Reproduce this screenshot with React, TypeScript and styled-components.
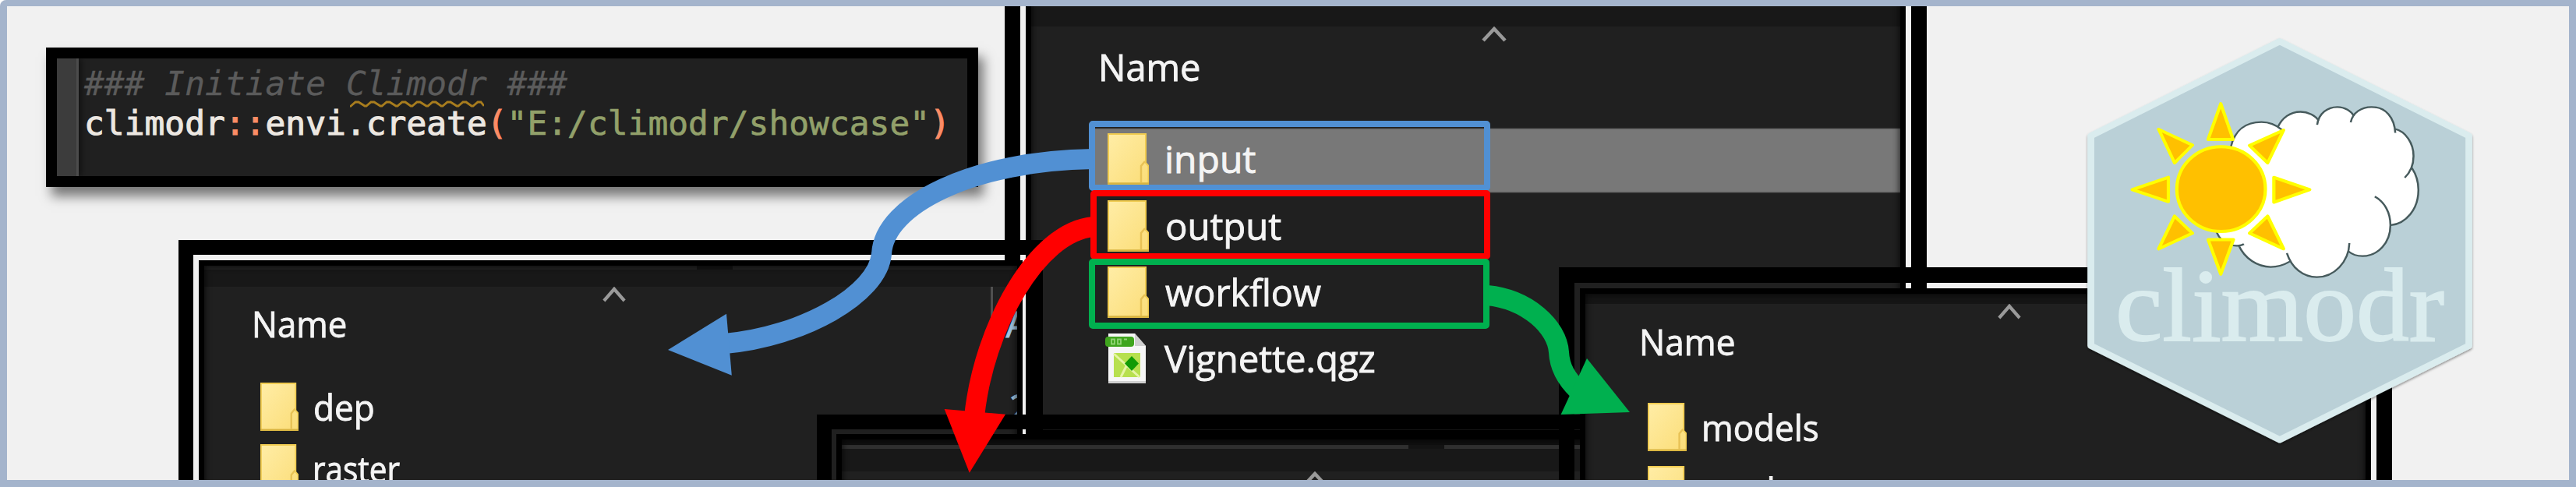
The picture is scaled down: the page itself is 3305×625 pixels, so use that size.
import React from "react";
import styled, { createGlobalStyle, css } from "styled-components";

const Global = createGlobalStyle`
  html, body { margin: 0; padding: 0; background: #fff; }
`;

const Stage = styled.main`
  position: relative;
  width: 3305px;
  height: 625px;
  overflow: hidden;
  background: #f1f1f1;
  border-radius: 8px 0 0 0;
  font-family: "Open Sans", "Noto Sans", sans-serif;
`;

const Frame = styled.div`
  position: absolute;
  inset: 0;
  border: 9px solid #a4b4cc;
  border-top-width: 8px;
  border-left-width: 9px;
  pointer-events: none;
`;

/* ---------- code window ---------- */

const CodeWindow = styled.section`
  position: absolute;
  left: 59px;
  top: 61px;
  width: 1196px;
  height: 179px;
  box-sizing: border-box;
  border: 14px solid #000;
  display: flex;
  background: #202020;
  box-shadow: 7px 12px 14px rgba(0, 0, 0, 0.5);
`;

const Gutter = styled.div`
  flex: 0 0 25px;
  background: #3c3c3c;
  border-right: 3px solid #4c4c4c;
  box-shadow: 3px 0 8px rgba(0, 0, 0, 0.5);
`;

const Code = styled.pre`
  margin: 0;
  padding: 7px 0 0 7px;
  font-family: "DejaVu Sans Mono", "Liberation Mono", monospace;
  font-size: 42.8px;
  letter-spacing: 0.07px;
  line-height: 51.4px;
  color: #ece7e1;
  -webkit-text-stroke: 1.1px currentColor;
`;

const Comment = styled.span`
  color: #5b5b5b;
  font-style: italic;
  -webkit-text-stroke: 0.3px currentColor;
`;

const Misspelled = styled.span`
  position: relative;
`;

const Squiggle = styled.svg`
  position: absolute;
  left: 5px;
  bottom: -6px;
  width: 172px;
  height: 9px;
`;

const Operator = styled.span`
  color: #fb8c66;
`;

const Text = styled.span`
  color: #92a06a;
  -webkit-text-stroke: 0.7px currentColor;
`;

/* ---------- explorer windows ---------- */

const Window = styled.section<{ $x: number; $y: number; $w: number; $h: number; $gap?: number; $ring?: number }>`
  position: absolute;
  left: ${(p) => p.$x}px;
  top: ${(p) => p.$y}px;
  width: ${(p) => p.$w}px;
  height: ${(p) => p.$h}px;
  box-sizing: border-box;
  display: flex;
  border: ${(p) => p.$ring ?? 20}px solid #000;
  padding: ${(p) => p.$gap ?? 7}px;
`;

const Pane = styled.div`
  flex: 1;
  min-width: 0;
  display: flex;
  flex-direction: column;
  overflow: hidden;
  background: #202020;
  border: 7px solid #000;
  position: relative;
  &::after {
    content: "";
    position: absolute;
    inset: 0;
    box-shadow: inset 0 0 9px 1px rgba(0, 0, 0, 0.75);
  }
`;

const Strip = styled.div<{ $h: number; $tone?: string }>`
  flex: 0 0 ${(p) => p.$h}px;
  background: ${(p) => p.$tone ?? "#181818"};
`;

const Seams = styled.div<{ $tone: string; $first: number }>`
  flex: 0 0 5px;
  display: grid;
  grid-template-columns: ${(p) => p.$first}px 1fr;
  column-gap: 46px;
  background: #141414;
  & > i { background: ${(p) => p.$tone}; }
`;

const Header = styled.header<{ $h: number; $indent: number; $top: number }>`
  flex: 0 0 ${(p) => p.$h}px;
  display: flex;
  align-items: flex-start;
  padding-left: ${(p) => p.$indent}px;
  & > span { margin-top: ${(p) => p.$top}px; }
`;

const Label = styled.span<{ $size: number; $sx?: number; $w?: number; $tone?: string }>`
  display: block;
  flex: none;
  ${(p) => p.$w !== undefined && css`width: ${p.$w}px;`}
  font-size: ${(p) => p.$size}px;
  line-height: 60px;
  white-space: nowrap;
  color: ${(p) => p.$tone ?? "#f4f4f4"};
  -webkit-text-stroke: 0.9px currentColor;
  transform: scaleX(${(p) => p.$sx ?? 1});
  transform-origin: 0 50%;
`;

const SortMark = styled.svg<{ $w?: number }>`
  flex: none;
  width: ${(p) => p.$w ?? 32}px;
  height: 20px;
`;

const ColumnRule = styled.i`
  flex: none;
  width: 3px;
  height: 75px;
  background: #505050;
`;

const Row = styled.div<{ $h: number; $indent: number; $selected?: boolean }>`
  flex: 0 0 ${(p) => p.$h}px;
  box-sizing: border-box;
  display: flex;
  align-items: center;
  padding: 0 0 3px ${(p) => p.$indent - 82}px;
  margin-left: 82px;
  ${(p) => p.$selected && css`background: linear-gradient(#202020 1px, #787878 3px, #787878 83px, #202020 85px);`}
`;

const PlainRow = styled(Row)`
  margin-left: 0;
  padding: 0 0 0 ${(p) => p.$indent}px;
`;

const Icon = styled.svg<{ $w: number; $h: number; $gap: number }>`
  flex: none;
  width: ${(p) => p.$w}px;
  height: ${(p) => p.$h}px;
  margin-right: ${(p) => p.$gap}px;
`;

function Folder({ w, h, gap }: { w: number; h: number; gap: number }) {
  return (
    <Icon $w={w} $h={h} $gap={gap} viewBox="0 0 53 66" preserveAspectRatio="none">
      <defs>
        <linearGradient id="folder" x1="0" y1="0" x2="1" y2="1">
          <stop offset="0" stopColor="#ffeda6" />
          <stop offset="1" stopColor="#fbdd78" />
        </linearGradient>
      </defs>
      <path d="M1 1H49V38L52.500 42V65H1Z" fill="url(#folder)" stroke="#f0cb50" strokeWidth="2" />
      <path d="M43 63V42L48 36" fill="none" stroke="#e8c255" strokeWidth="2.500" />
      <path d="M0 64.500H53" stroke="#d9b440" strokeWidth="2.500" />
    </Icon>
  );
}

function ProjectFile() {
  return (
    <Icon $w={54} $h={66} $gap={22} viewBox="0 0 54 66" preserveAspectRatio="none">
      <path d="M4 1H38L52 17V65H4Z" fill="#f6f6f6" />
      <path d="M38 1V17H52Z" fill="#cfcfcf" />
      <path d="M4 63.500H52" stroke="#d0d0d0" strokeWidth="3" />
      <rect x="0" y="5" width="37" height="13" rx="4" fill="#3fa51d" />
      <path d="M8 8.500H12V14.500H8ZM16 8.500H20V14.500H16ZM24 8.500H28" fill="none" stroke="#8fd474" strokeWidth="1.800" />
      <rect x="11" y="26" width="34" height="31" fill="#b7e04e" />
      <path d="M11 27L44 57M28 41L20 57" stroke="#e6f5a5" strokeWidth="3" />
      <path d="M34 30L43 39.500L34 49L25 39.500Z" fill="#129b05" />
    </Icon>
  );
}

function Sort({ w }: { w?: number }) {
  return (
    <SortMark $w={w} viewBox="0 0 32 20" preserveAspectRatio="none">
      <path d="M2 18L16 3L30 18" fill="none" stroke="#9a9a9a" strokeWidth="4.500" />
    </SortMark>
  );
}

/* ---------- annotations ---------- */

const Highlight = styled.div<{ $x: number; $y: number; $w: number; $h: number; $tone: string }>`
  position: absolute;
  left: ${(p) => p.$x}px;
  top: ${(p) => p.$y}px;
  width: ${(p) => p.$w}px;
  height: ${(p) => p.$h}px;
  box-sizing: border-box;
  border: 8.500px solid ${(p) => p.$tone};
  border-radius: 5px;
  &::after {
    content: "";
    position: absolute;
    inset: -1px;
    border: 1.500px solid ${(p) => p.$tone};
  }
`;

const Arrows = styled.svg`
  position: absolute;
  left: 0;
  top: 0;
  width: 3305px;
  height: 625px;
`;

const Badge = styled.svg`
  position: absolute;
  left: 2650px;
  top: 20px;
  width: 655px;
  height: 605px;
  overflow: visible;
`;

const rays = [
  "477,293 515,412 438,412",
  "670,381 621,490 565,432",
  "750,579 640,621 640,538",
  "670,776 565,724 621,667",
  "477,860 438,745 516,745",
  "286,776 335,667 390,724",
  "205,579 316,538 316,619",
  "286,378 390,431 335,490",
];

const lobes =
  "M508 437C520 380 555 354 602 354C625 354 645 362 665 380M652 372C665 340 690 320 722 320C745 320 768 333 778 350" +
  "M773 363C778 325 805 304 835 304C858 304 878 318 886 335M876 355C882 322 910 304 940 304C985 304 1010 340 1013 390" +
  "M1011 377C1045 385 1069 425 1069 467C1069 498 1060 520 1042 539M1064 507C1078 530 1084 552 1084 580C1084 645 1045 692 1000 697" +
  "M950 602C980 620 998 655 998 697C998 755 960 800 912 800C895 800 880 794 869 784M872 757C870 820 825 870 772 870C730 870 695 840 680 790" +
  "M689 818C670 830 650 836 630 836C590 836 550 808 532 764M548 760C540 766 520 768 505 762C485 755 472 740 464 720";

const cloud =
  "M508 437C520 380 555 354 602 354C622 354 640 362 652 372C665 340 690 320 722 320C745 320 768 333 778 348C788 320 808 304 835 304" +
  "C858 304 878 318 886 333C898 314 916 304 940 304C980 304 1008 335 1013 377C1045 385 1069 425 1069 467C1069 482 1068 495 1064 507" +
  "C1078 530 1084 552 1084 580C1084 645 1045 692 1000 697C998 755 960 800 912 800C895 800 880 794 869 784C860 835 820 870 772 870" +
  "C735 870 705 850 689 818C670 830 650 836 630 836C590 836 550 808 532 764C500 770 475 745 464 720L430 577Z";

export default function App() {
  return (
    <>
      <Global />
      <Stage>
        <CodeWindow>
          <Gutter />
          <Code>
            <Comment>
              {"### Initiate "}
              <Misspelled>
                Climodr
                <Squiggle viewBox="0 0 172 9">
                  <path
                    d="M0 8L7 2H11L19 7H21L27 2H31L39 7H41L47 2H51L59 7H61L67 2H71L78 7H80L86 2H90L98 7H100L106 2H110L117 7H119L125 2H129L137 7H139L145 2H149L156 7H158L164 2H168L172 7"
                    fill="none"
                    stroke="#a87d1e"
                    strokeWidth="2.800"
                  />
                </Squiggle>
              </Misspelled>
              {" ###"}
            </Comment>
            {"\nclimodr"}
            <Operator>::</Operator>envi.create<Operator>(</Operator>
            <Text>"E:/climodr/showcase"</Text>
            <Operator>)</Operator>
          </Code>
        </CodeWindow>

        <Window $x={1289} $y={-60} $w={1183} $h={646}>
          <Pane>
            <Strip $h={60} />
            <Header $h={129} $indent={86} $top={21.5}>
              <Label $size={48} $sx={0.98} $w={492}>Name</Label>
              <Sort />
            </Header>
            <Row $h={85.4} $indent={98} $selected>
              <Folder w={53} h={66} gap={20} />
              <Label $size={48} $sx={1.0}>input</Label>
            </Row>
            <Row $h={85.4} $indent={98}>
              <Folder w={53} h={66} gap={21} />
              <Label $size={48} $sx={0.985}>output</Label>
            </Row>
            <Row $h={85.4} $indent={98}>
              <Folder w={53} h={66} gap={21} />
              <Label $size={48} $sx={0.975}>workflow</Label>
            </Row>
            <Row $h={85.4} $indent={95}>
              <ProjectFile />
              <Label $size={48} $sx={0.985}>Vignette.qgz</Label>
            </Row>
          </Pane>
        </Window>

        <Window $x={229} $y={308} $w={1109} $h={420} $ring={19}>
          <Pane>
            <Seams $tone="#242424" $first={632}><i /><i /></Seams>
            <Strip $h={22} />
            <Header $h={114} $indent={61} $top={17}>
              <Label $size={46} $sx={0.95} $w={450}>Name</Label>
              <Sort w={30} />
              <Label $size={46} $w={468}> </Label>
              <ColumnRule />
              <Label $size={46} $tone="#9fc4e0">{"\u00a0\u200aÄnderungsdatum"}</Label>
            </Header>
            <PlainRow $h={79} $indent={72}>
              <Folder w={49} h={62} gap={19} />
              <Label $size={46} $sx={0.96} $w={893}>dep</Label>
              <Label $size={46} $tone="#9fc4e0">22.03.2023</Label>
            </PlainRow>
            <PlainRow $h={79} $indent={72}>
              <Folder w={49} h={62} gap={18} />
              <Label $size={46} $sx={0.88}>raster</Label>
            </PlainRow>
          </Pane>
        </Window>

        <Window $x={1048} $y={532} $w={1100} $h={200} $ring={19} $gap={6}>
          <Pane>
            <Strip $h={7} $tone="#101010" />
            <Seams $tone="#303030" $first={727}><i /><i /></Seams>
            <Strip $h={29} />
            <Header $h={110} $indent={591} $top={20}>
              <Sort />
            </Header>
          </Pane>
        </Window>

        <Window $x={2000} $y={343} $w={1069} $h={400}>
          <Pane>
            <Strip $h={13} $tone="#151515" />
            <Header $h={118} $indent={69} $top={18}>
              <Label $size={46} $sx={0.96} $w={460}>Name</Label>
              <Sort w={30} />
            </Header>
            <PlainRow $h={80.5} $indent={80}>
              <Folder w={50} h={62} gap={19} />
              <Label $size={46} $sx={0.955}>models</Label>
            </PlainRow>
            <PlainRow $h={80.5} $indent={80}>
              <Folder w={50} h={62} gap={16} />
              <Label $size={46} $sx={0.97}>pred</Label>
            </PlainRow>
          </Pane>
        </Window>

        <Highlight $x={1397} $y={155} $w={515} $h={90} $tone="#5190d3" />
        <Highlight $x={1399} $y={244} $w={513} $h={89} $tone="#ff0000" />
        <Highlight $x={1397} $y={332} $w={514} $h={90} $tone="#00b04f" />

        <Arrows viewBox="0 0 3305 625">
          <g fill="none" strokeWidth="26">
            <path d="M1402 204C1250 206 1134 262 1131 326C1126 378 1030 432 930 441" stroke="#5190d3" />
            <path d="M1403 291C1330 297 1262 420 1250 535" stroke="#ff0000" />
            <path d="M1908 379C1960 384 1998 420 2000 452C2001 472 2010 487 2026 502" stroke="#00b04f" />
          </g>
          <path d="M857 449L932 402.700L938.800 481.700Z" fill="#5190d3" />
          <path d="M1243.800 606.700L1211.700 525L1290 531.700Z" fill="#ff0000" />
          <path d="M2091 529L2036 460L2002.600 532Z" fill="#00b04f" />
        </Arrows>

        <Badge viewBox="0 0 1568 1568" preserveAspectRatio="none">
          <defs>
            <filter id="drop" x="-10%" y="-10%" width="120%" height="120%">
              <feDropShadow dx="0" dy="5" stdDeviation="4" floodColor="#000" floodOpacity="0.4" />
            </filter>
          </defs>
          <path
            d="M658 86L1239 400V1098L658 1411L78 1098V400Z"
            fill="#bad0d7"
            stroke="#daecee"
            strokeWidth="21"
            strokeLinejoin="round"
            filter="url(#drop)"
          />
          <path d={cloud} fill="#fff" />
          <path d={lobes} fill="none" stroke="#465a5c" strokeWidth="6" />
          <g fill="#ffc000" stroke="#ffff00" strokeWidth="10" strokeLinejoin="round">
            <ellipse cx="478" cy="577" rx="136" ry="141" />
            {rays.map((points) => (
              <polygon key={points} points={points} />
            ))}
          </g>
          <g transform="scale(2.394 2.592)">
            <text
              x="64"
              y="417"
              textLength="422"
              lengthAdjust="spacingAndGlyphs"
              fontFamily="'Liberation Serif', serif"
              fontSize="133"
              fill="#daecee"
              stroke="#daecee"
              strokeWidth="1.800"
            >
              climodr
            </text>
          </g>
        </Badge>

        <Frame />
      </Stage>
    </>
  );
}
